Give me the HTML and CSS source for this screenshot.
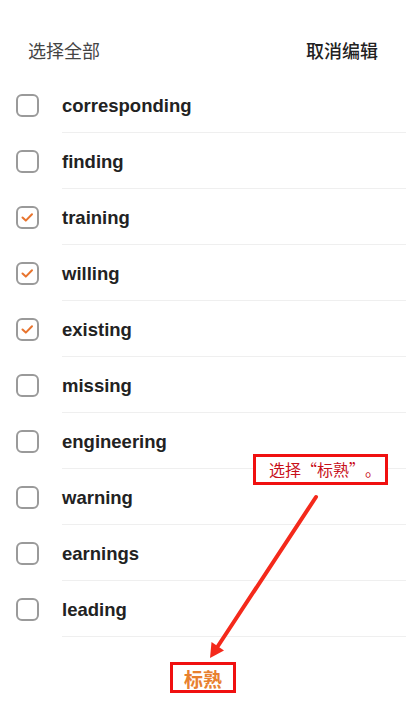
FILE: index.html
```html
<!DOCTYPE html>
<html lang="zh-CN">
<head>
    <meta charset="UTF-8">
    <meta name="viewport" content="width=device-width, initial-scale=1.0">
    <title>编辑单词</title>
    <link rel="stylesheet" href="styles.css">
</head>
<body>

    <div class="page">
        <div class="header">
            <span class="select-all">选择全部</span>
            <span class="cancel">取消编辑</span>
        </div>

        <ul class="word-list">
            <li class="row"><span class="box"></span><span class="word">corresponding</span></li>
            <li class="row"><span class="box"></span><span class="word">finding</span></li>
            <li class="row"><span class="box checked"><svg viewBox="0 0 19 19"><path d="M4.5 9.5 L7.8 12.6 L14 6.2"/></svg></span><span class="word">training</span></li>
            <li class="row"><span class="box checked"><svg viewBox="0 0 19 19"><path d="M4.5 9.5 L7.8 12.6 L14 6.2"/></svg></span><span class="word">willing</span></li>
            <li class="row"><span class="box checked"><svg viewBox="0 0 19 19"><path d="M4.5 9.5 L7.8 12.6 L14 6.2"/></svg></span><span class="word">existing</span></li>
            <li class="row"><span class="box"></span><span class="word">missing</span></li>
            <li class="row"><span class="box"></span><span class="word">engineering</span></li>
            <li class="row"><span class="box"></span><span class="word">warning</span></li>
            <li class="row"><span class="box"></span><span class="word">earnings</span></li>
            <li class="row"><span class="box"></span><span class="word">leading</span></li>
        </ul>

        <div class="footer">
            <button class="mark-btn highlight">标熟</button>
        </div>

        <!-- callout + arrow pointing at the button -->
        <div class="callout">选择<span class="punct open">“</span>标熟<span class="punct close">”</span><span class="punct">。</span></div>
        <svg class="arrow" width="406" height="720" viewBox="0 0 406 720">
            <line x1="316" y1="497" x2="218" y2="646" stroke="#f4291b" stroke-width="4" stroke-linecap="round"/>
            <polygon points="210,658 224,650.5 211.5,642" fill="#f4291b"/>
        </svg>
    </div>

</body>
</html>
```

FILE: styles.css
```css
* {
    box-sizing: border-box;
}
body {
    margin: 0;
    background: #fff;
    font-family: "Liberation Sans", "Noto Sans CJK SC", sans-serif;
}
.page {
    position: relative;
    width: 406px;
    height: 720px;
    overflow: hidden;
}
.header {
    display: flex;
    justify-content: space-between;
    padding: 37px 28px 0 28px;
    margin-bottom: 14px;
    line-height: 26px;
    font-size: 18px;
    font-family: "Noto Sans CJK SC", sans-serif;
}
.select-all {
    color: #444;
}
.cancel {
    color: #222;
    font-weight: 500;
}
.word-list {
    list-style: none;
    margin: 0;
    padding: 0;
}
.row {
    display: flex;
    align-items: stretch;
    height: 56px;
    padding-left: 16px;
}
.box {
    flex: none;
    align-self: center;
    width: 23px;
    height: 23px;
    border: 2px solid #9a9a9a;
    border-radius: 6px;
    margin-right: 23px;
}
.box svg {
    display: block;
    width: 19px;
    height: 19px;
}
.box path {
    fill: none;
    stroke: #e8742e;
    stroke-width: 2;
    stroke-linecap: round;
    stroke-linejoin: round;
}
.word {
    flex: 1;
    display: flex;
    align-items: center;
    padding-top: 3px;
    border-bottom: 1px solid #efefef;
    font-size: 18.5px;
    font-weight: bold;
    color: #222;
}
.footer {
    display: flex;
    justify-content: center;
    padding-top: 25px;
}
.mark-btn {
    background: #fff;
    border: none;
    padding: 0 11px;
    height: 31px;
    font-family: "Noto Sans CJK SC", sans-serif;
    font-size: 19px;
    font-weight: bold;
    color: #e8802e;
}
.highlight {
    border: 3px solid #f01010;
}
.callout {
    position: absolute;
    left: 253px;
    top: 454px;
    width: 135px;
    height: 31px;
    border: 3px solid #f01010;
    background: #fff;
    color: #c8101a;
    font-family: "Noto Sans CJK SC", sans-serif;
    font-size: 16px;
    line-height: 25px;
    padding-left: 13px;
    white-space: nowrap;
}
/* full-width punctuation cells */
.punct {
    display: inline-block;
    width: 1em;
    text-align: center;
}
.punct.open {
    text-align: right;
}
.punct.close {
    text-align: left;
}
.arrow {
    position: absolute;
    left: 0;
    top: 0;
    pointer-events: none;
}
```
